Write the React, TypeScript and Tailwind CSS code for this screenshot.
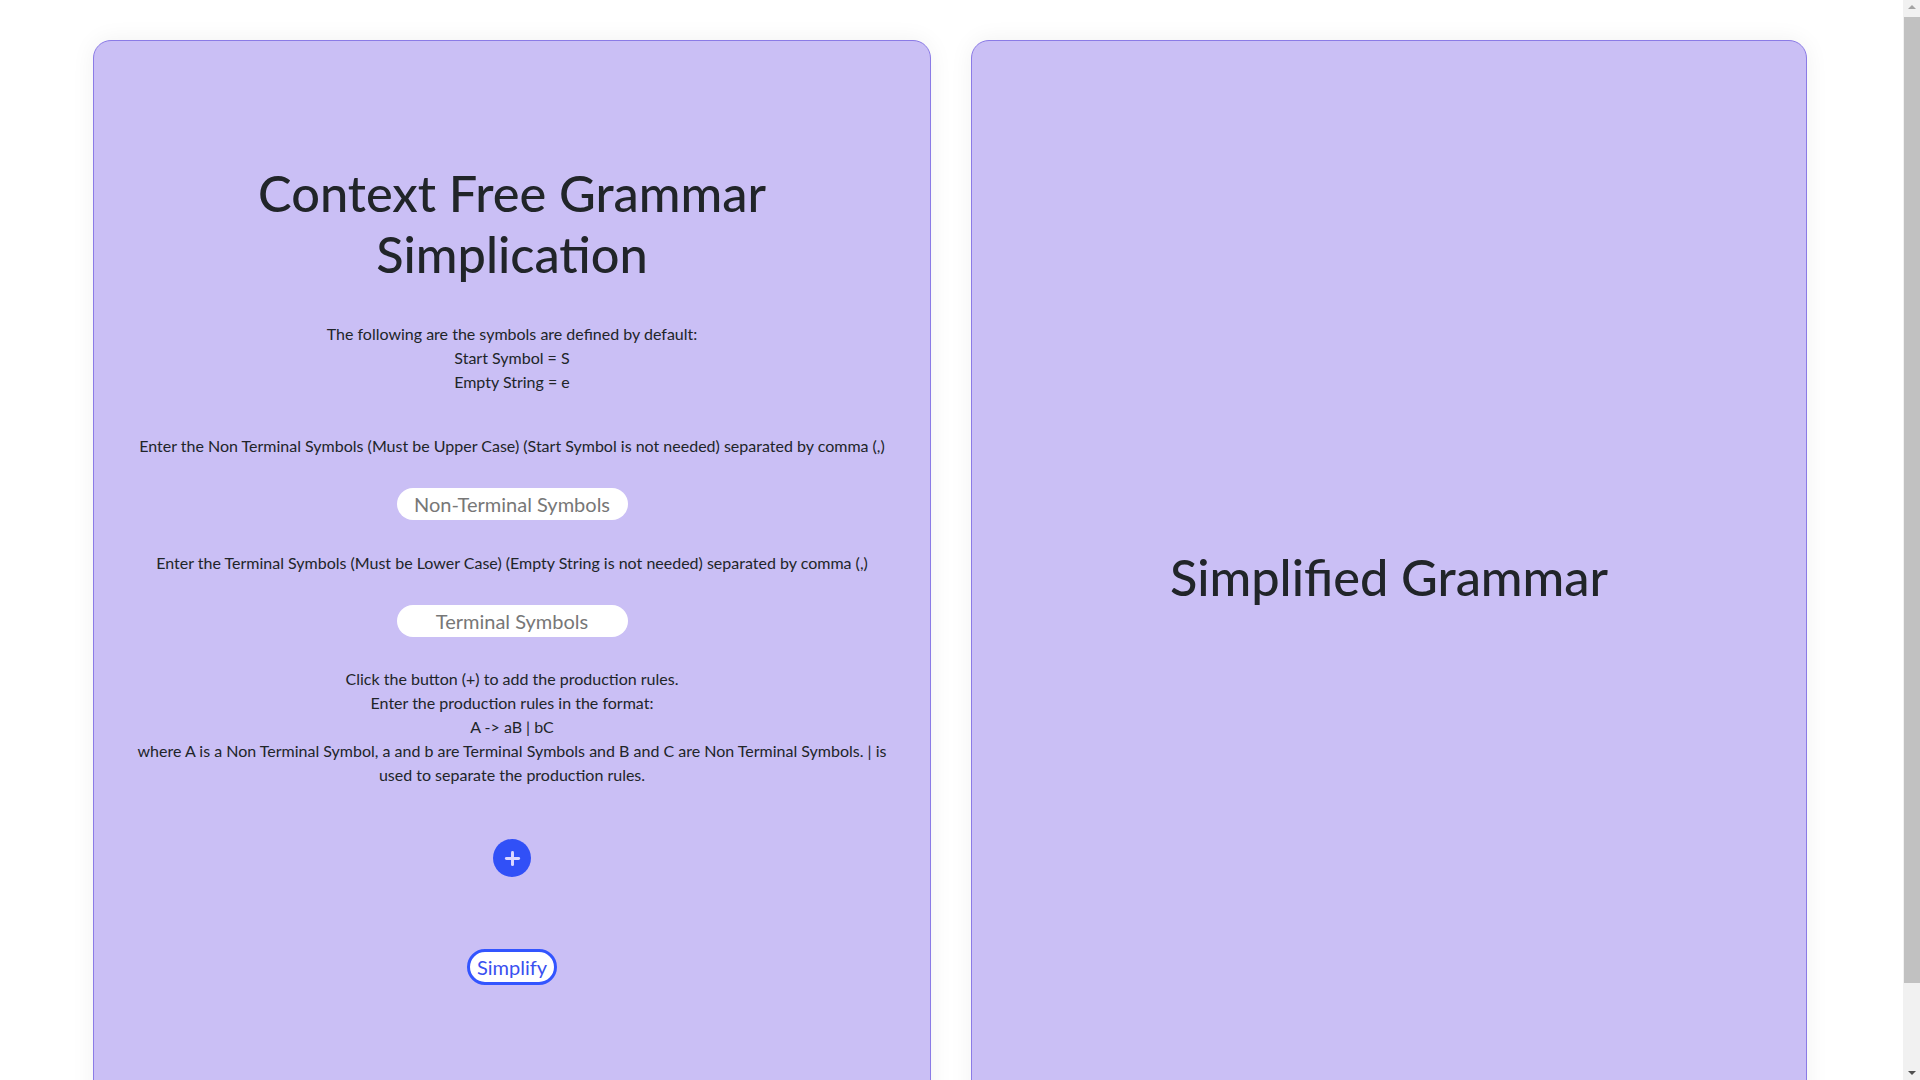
import { Plus } from 'lucide-react'

export default function App() {
  return (
    <div className="min-h-screen bg-white pr-[20px] font-['Lato',sans-serif] text-[#212529]">
      <div className="flex justify-center gap-10 py-10">
        <section className="flex h-[1090px] w-[838px] flex-col items-center rounded-[18px] border border-[#8b7be6] bg-[#cabff5] px-5 pt-[122px] text-center shadow-[0_0_24px_rgba(0,0,0,0.06)]">
          <h1 className="text-[50.5px] font-medium leading-[1.2]">
            Context Free Grammar
            <br />
            Simplication
          </h1>

          <p className="mt-[38px] text-[16px] leading-6">
            The following are the symbols are defined by default:
            <br />
            Start Symbol = S
            <br />
            Empty String = e
          </p>

          <p className="mt-[40px] text-[16px] leading-6">
            Enter the Non Terminal Symbols (Must be Upper Case) (Start Symbol is not needed) separated by comma (,)
          </p>
          <input
            className="mt-[30px] h-8 w-[231px] rounded-full bg-white px-1 text-center text-[20px] text-[#212529] outline-none placeholder:text-[#777]"
            placeholder="Non-Terminal Symbols"
          />

          <p className="mt-[31px] text-[16px] leading-6">
            Enter the Terminal Symbols (Must be Lower Case) (Empty String is not needed) separated by comma (,)
          </p>
          <input
            className="mt-[30px] h-8 w-[231px] rounded-full bg-white px-1 text-center text-[20px] text-[#212529] outline-none placeholder:text-[#777]"
            placeholder="Terminal Symbols"
          />

          <p className="mt-[30px] text-[16px] leading-6">
            Click the button (+) to add the production rules.
            <br />
            Enter the production rules in the format:
            <br />
            A -&gt; aB | bC
            <br />
            where A is a Non Terminal Symbol, a and b are Terminal Symbols and B and C are Non Terminal Symbols. | is
            <br />
            used to separate the production rules.
          </p>

          <button className="mt-[52px] flex h-[38px] w-[38px] items-center justify-center rounded-full bg-[#3150f7] text-[#dcd7ff]">
            <Plus size={21} strokeWidth={3.4} />
          </button>

          <button className="mt-[72px] flex h-9 items-center rounded-full border-[3px] border-[#3355ff] bg-white px-[7px] text-[20px] leading-none text-[#3a50f0]">
            Simplify
          </button>
        </section>

        <section className="flex h-[1090px] w-[836px] items-center justify-center rounded-[18px] border border-[#8b7be6] bg-[#cabff5] pb-4 shadow-[0_0_24px_rgba(0,0,0,0.06)]">
          <h1 className="text-[50.5px] font-medium leading-[1.2]">Simplified Grammar</h1>
        </section>
      </div>

      {/* window scrollbar as seen in the screenshot */}
      <div className="fixed right-0 top-0 flex h-screen w-[17px] flex-col items-center bg-[#f1f1f1]">
        <div className="mt-[5px] h-0 w-0 border-x-[4px] border-b-[4px] border-x-transparent border-b-[#a3a3a3]" />
        <div className="mt-[8px] h-[966px] w-[16px] bg-[#c1c1c1]" />
        <div className="mt-auto mb-[5px] h-0 w-0 border-x-[4px] border-t-[4px] border-x-transparent border-t-[#505050]" />
      </div>
    </div>
  )
}
